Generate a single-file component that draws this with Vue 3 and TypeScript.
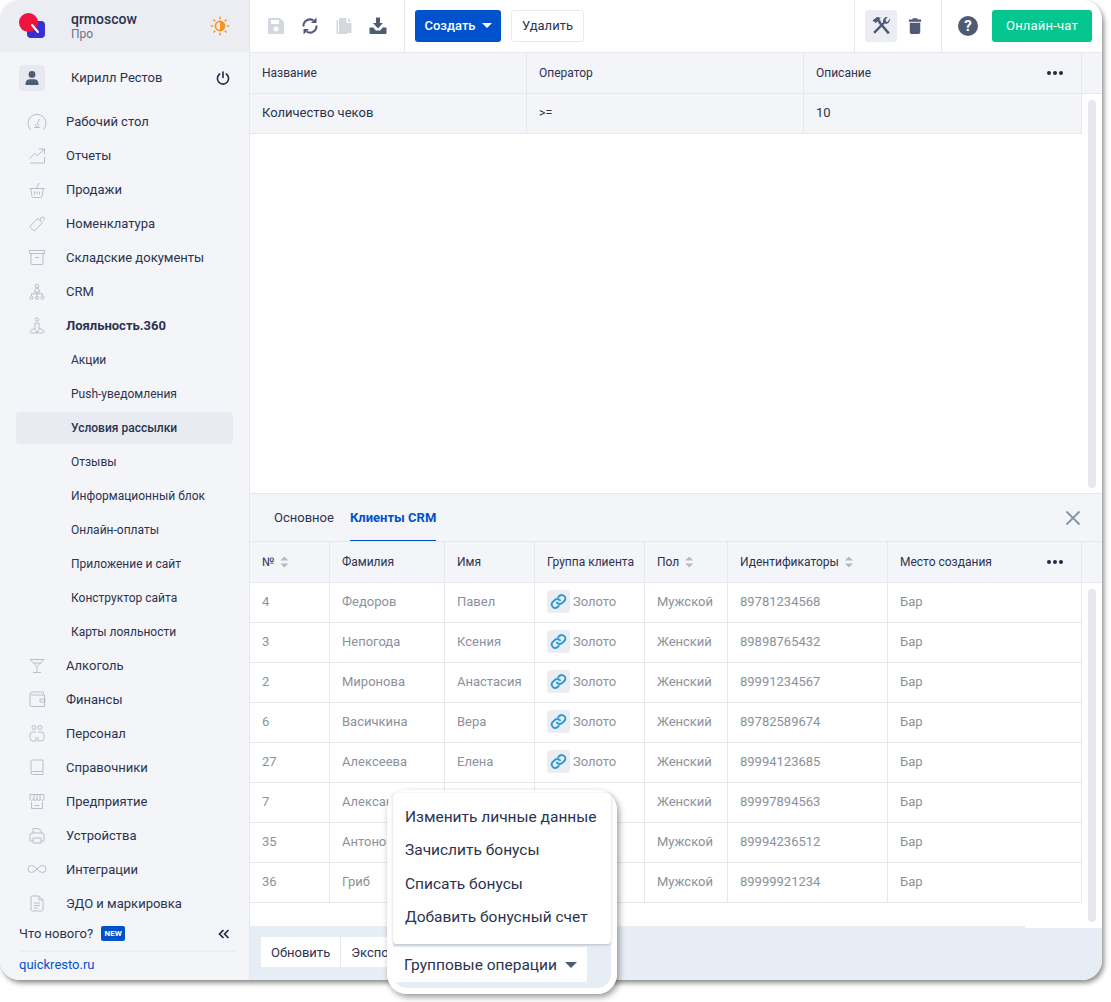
<template>
  <div class="page">
    <div class="window">
      <aside class="sidebar">
        <div class="brand">
          <svg class="logo" width="26" height="26" viewBox="0 0 26 26">
            <rect x="8" y="8" width="18" height="17" rx="4" fill="#3a2fd0" />
            <circle cx="9.500" cy="9.500" r="9.500" fill="#f0123f" />
            <path d="M13 12l6 7" stroke="#fff" stroke-width="2" stroke-linecap="round" />
          </svg>
          <div class="brandText">
            <div class="brandName">qrmoscow</div>
            <div class="brandPlan">Про</div>
          </div>
          <svg class="sun" width="20" height="20" viewBox="0 0 20 20">
            <circle cx="10" cy="10" r="4.600" fill="none" stroke="#f7941d" stroke-width="1.600" />
            <path d="M10 5.400a4.600 4.600 0 0 1 0 9.200z" fill="#f7941d" />
            <path d="M10 .8v2.400M10 16.800v2.400M.8 10h2.400M16.800 10h2.400M3.500 3.500l1.700 1.700M14.800 14.800l1.700 1.700M3.500 16.500l1.700-1.700M14.800 5.200l1.700-1.700" stroke="#f7941d" stroke-width="1.500" />
          </svg>
        </div>

        <div class="user">
          <div class="avatar">
            <svg width="16" height="16" viewBox="0 0 16 16" fill="#4f5b76">
              <circle cx="8" cy="4.400" r="3.400" />
              <path d="M1.500 15v-1.600C1.500 10.800 3.600 9.200 6 9.200h4c2.400 0 4.500 1.600 4.500 4.200V15z" />
            </svg>
          </div>
          <span class="userName">Кирилл Рестов</span>
          <svg class="power" width="14" height="14" viewBox="0 0 14 14" fill="none" stroke="#1f2a44" stroke-width="1.600" stroke-linecap="round">
            <path d="M7 1v5.500M3.700 3a5.600 5.600 0 1 0 6.600 0" />
          </svg>
        </div>

        <nav class="nav">
          <template v-for="item in navItems" :key="item.label">
            <div v-if="item.icon" class="navItem" :class="{ navBold: item.bold }">
              <svg class="navIcon" width="20" height="20" viewBox="0 0 20 20" fill="none" stroke="#b9bec8" stroke-width="1">
                <path v-for="d in item.icon" :key="d" :d="d" />
              </svg>
              <span>{{ item.label }}</span>
            </div>
            <div v-else class="subItem" :class="{ subActive: item.active }">{{ item.label }}</div>
          </template>
        </nav>

        <div class="news">
          <span>Что нового?</span>
          <span class="newBadge">NEW</span>
          <svg class="collapse" width="12" height="10" viewBox="0 0 12 10" fill="none" stroke="#1f2a44" stroke-width="1.700">
            <path d="M5.500 1L1.500 5l4 4M10.500 1l-4 4 4 4" />
          </svg>
        </div>
        <div class="siteLink">quickresto.ru</div>
      </aside>

      <main class="main">
        <header class="toolbar">
          <div class="toolGroup iconsGroup">
            <svg width="20" height="20" viewBox="0 0 20 20" fill="#d3d7de">
              <path fill-rule="evenodd" d="M3.500 2h10.500L18 6v10.500a1.500 1.500 0 0 1-1.500 1.500h-13A1.500 1.500 0 0 1 2 16.500v-13A1.500 1.500 0 0 1 3.500 2zM5 4v4h8V4zM10 10.500a2.500 2.500 0 1 0 0 5 2.500 2.500 0 0 0 0-5z" />
            </svg>
            <svg width="20" height="20" viewBox="0 0 20 20" fill="none" stroke="#4f5b76" stroke-width="2">
              <path d="M3.500 10.500A6.500 6.500 0 0 1 13.500 4.500M16.500 9.500A6.500 6.500 0 0 1 6.500 15.500" />
              <path d="M16.500 1.500V7H11z" fill="#4f5b76" stroke="none" />
              <path d="M3.500 18.500V13H9z" fill="#4f5b76" stroke="none" />
            </svg>
            <svg width="20" height="20" viewBox="0 0 20 20" fill="#d3d7de">
              <path d="M2.500 4H4v12.500h9V18H3.500a1 1 0 0 1-1-1z" />
              <path d="M6 2h6.500v5h5v9a1 1 0 0 1-1 1H6a1 1 0 0 1-1-1V3a1 1 0 0 1 1-1zM14 2l3.500 3.500H14z" />
            </svg>
            <svg width="20" height="20" viewBox="0 0 20 20" fill="#4f5b76">
              <path d="M8 1.500h4V7h3l-5 5.500L5 7h3z" />
              <path d="M1.500 11.500h3.800l2.500 3h4.400l2.500-3h3.800V17a1 1 0 0 1-1 1h-15a1 1 0 0 1-1-1z" />
            </svg>
          </div>
          <div class="toolGroup actionsGroup">
            <button class="btn btnPrimary">Создать<span class="caret"></span></button>
            <button class="btn btnPlain">Удалить</button>
          </div>
          <div class="toolGroup toolsGroup">
            <span class="toolActive">
              <svg width="22" height="22" viewBox="0 0 22 22" fill="#4f5b76">
                <path d="M2.500 5.500L7 2l4 .8-1.700 1.500 1.700 2L9.300 8 7.700 6.300 5.800 8z" />
                <path d="M8 7.500l1.800-1.500 10 11.500-2 1.800z" />
                <path d="M19.700 3.300a4 4 0 0 1-5 5.200L5 18.800l-1.800-1.700 9.900-10a4 4 0 0 1 4.700-5l-2.300 2.400.5 1.900 1.900.4z" />
              </svg>
            </span>
            <svg class="trash" width="14" height="18" viewBox="0 0 16 20" fill="#4f5b76">
              <path d="M5.500 1h5l.6 1.500H15V5H1V2.500h3.900zM2 6.200h12V17a2 2 0 0 1-2 2H4a2 2 0 0 1-2-2z" />
            </svg>
          </div>
          <div class="toolGroup helpGroup">
            <span class="help">?</span>
            <button class="btn btnChat">Онлайн-чат</button>
          </div>
        </header>

        <section class="topPanel">
          <table class="grid topGrid">
            <colgroup>
              <col style="width: 277px" />
              <col style="width: 277px" />
              <col style="width: 278px" />
            </colgroup>
            <thead>
              <tr>
                <th>Название</th>
                <th>Оператор</th>
                <th>
                  <div class="thFlex">Описание<span class="dots"><i></i><i></i><i></i></span></div>
                </th>
              </tr>
            </thead>
            <tbody>
              <tr>
                <td>Количество чеков</td>
                <td class="small">&gt;=</td>
                <td>10</td>
              </tr>
            </tbody>
          </table>
          <div class="scrollThumb topThumb"></div>
        </section>

        <section class="bottomPanel">
          <div class="tabs">
            <span class="tab">Основное</span>
            <span class="tab tabActive">Клиенты CRM</span>
            <svg class="close" width="16" height="16" viewBox="0 0 16 16" stroke="#8195a6" stroke-width="1.800" fill="none">
              <path d="M1.500 1.500l13 13M14.500 1.500l-13 13" />
            </svg>
          </div>
          <div class="headFill">
            <table class="grid clientGrid">
              <colgroup>
                <col v-for="w in clientCols" :key="w" :style="{ width: w + 'px' }" />
              </colgroup>
              <thead>
                <tr>
                  <th><div class="thSort">№<span class="sort"></span></div></th>
                  <th>Фамилия</th>
                  <th>Имя</th>
                  <th>Группа клиента</th>
                  <th><div class="thSort">Пол<span class="sort"></span></div></th>
                  <th><div class="thSort">Идентификаторы<span class="sort"></span></div></th>
                  <th>
                    <div class="thFlex">Место создания<span class="dots"><i></i><i></i><i></i></span></div>
                  </th>
                </tr>
              </thead>
              <tbody>
                <tr v-for="c in clients" :key="c.id">
                  <td>{{ c.id }}</td>
                  <td class="clip">{{ c.last }}</td>
                  <td>{{ c.first }}</td>
                  <td>
                    <div v-if="c.first" class="groupCell">
                      <span class="linkBox">
                        <svg width="17" height="17" viewBox="0 0 24 24" fill="none" stroke="#2a9bd8" stroke-width="2.800" stroke-linecap="round">
                          <path d="M10 13.500a5 5 0 0 0 7.500.5l3-3a5 5 0 0 0-7-7l-1.700 1.700" />
                          <path d="M14 10.500a5 5 0 0 0-7.500-.5l-3 3a5 5 0 0 0 7 7l1.700-1.700" />
                        </svg>
                      </span>
                      Золото
                    </div>
                  </td>
                  <td>{{ c.gender }}</td>
                  <td>{{ c.phone }}</td>
                  <td>Бар</td>
                </tr>
              </tbody>
            </table>
          </div>
          <div class="scrollThumb bottomThumb"></div>
        </section>

        <footer class="footer">
          <button class="footBtn">Обновить</button>
          <button class="footBtn footExport">Экспорт</button>
        </footer>
      </main>
    </div>

    <div class="callout">
      <ul class="menu">
        <li v-for="op in groupOps" :key="op">{{ op }}</li>
      </ul>
      <button class="groupBtn">Групповые операции<span class="caret caretGrey"></span></button>
    </div>
  </div>
</template>

<script setup lang="ts">
interface NavItem {
  label: string
  icon?: string[]
  bold?: boolean
  active?: boolean
}

interface Client {
  id: number
  last: string
  first: string
  gender: string
  phone: string
}

const navItems: NavItem[] = [
  { label: 'Рабочий стол', icon: ['M4 19A9 9 0 1 1 16 19', 'M10 13.500L12.500 8', 'M7 16.500H13', 'M8.500 13a1.700 1.700 0 1 0 3 0'] },
  { label: 'Отчеты', icon: ['M2.500 13.500L8 8.500L10.500 10.500L17 4.500', 'M12 4H17.500V9', 'M3 18H17.500V12'] },
  { label: 'Продажи', icon: ['M12 4L9.500 9', 'M2.500 9.500H17.500', 'M3.800 10L5 17.200Q5.200 18.500 6.500 18.500H13.500Q14.800 18.500 15 17.200L16.200 10', 'M7.500 12.500V15.500M10 12.500V15.500M12.500 12.500V15.500'] },
  { label: 'Номенклатура', icon: ['M3.200 13L11 5.500L15.500 9.500L8 17.500Q7.300 18 6.500 17.500L3.300 14.500Q2.700 13.700 3.200 13Z', 'M13 7.500Q13.500 3.500 16 4Q18.500 4.700 16.500 7.500'] },
  { label: 'Складские документы', icon: ['M2.500 3.500H17.500V6.500H2.500Z', 'M4 6.500V16.500Q4 17.500 5 17.500H15Q16 17.500 16 16.500V6.500', 'M8 10.500H12'] },
  { label: 'CRM', icon: ['M8.200 5a1.800 1.800 0 1 0 3.600 0a1.800 1.800 0 1 0-3.600 0', 'M7 11L8.800 7.500H11.200L13 11Z', 'M4.500 15V12.800H15.500V15', 'M10 11V15', 'M3 16.800a1.500 1.500 0 1 0 3 0a1.500 1.500 0 1 0-3 0M8.500 16.800a1.500 1.500 0 1 0 3 0a1.500 1.500 0 1 0-3 0M14 16.800a1.500 1.500 0 1 0 3 0a1.500 1.500 0 1 0-3 0'] },
  { label: 'Лояльность.360', bold: true, icon: ['M8.300 4.500a1.700 1.700 0 1 0 3.400 0a1.700 1.700 0 1 0-3.400 0', 'M8 8H12V13L16.500 15.500Q18 17 16 18H4Q2 17 3.500 15.500L8 13Z', 'M8 13V15L11 18', 'M12 13V15L9 18'] },
  { label: 'Акции' },
  { label: 'Push-уведомления' },
  { label: 'Условия рассылки', active: true },
  { label: 'Отзывы' },
  { label: 'Информационный блок' },
  { label: 'Онлайн-оплаты' },
  { label: 'Приложение и сайт' },
  { label: 'Конструктор сайта' },
  { label: 'Карты лояльности' },
  { label: 'Алкоголь', icon: ['M3 4.500H17L10 11.500Z', 'M6 8H14', 'M10 11.500V17', 'M6 17.500H14'] },
  { label: 'Финансы', icon: ['M3 5.500Q3 3 5.500 3H16.500V5.500', 'M3 5.500V16Q3 17.500 4.500 17.500H17.500V6H4', 'M13 10.200H18V13H13Z'] },
  { label: 'Персонал', icon: ['M5 4.500a2 2 0 1 0 4 0a2 2 0 1 0-4 0M11 4.500a2 2 0 1 0 4 0a2 2 0 1 0-4 0', 'M9 9H5.500Q3 9 3 12V15Q3 18 6 18H9V14', 'M11 9H14.500Q17 9 17 12V15Q17 18 14 18H11V14'] },
  { label: 'Справочники', icon: ['M4 15V4.500Q4 3 5.500 3H16V14.500H5.500Q4 14.500 4 16Q4 17.500 5.500 17.500H16V15.500'] },
  { label: 'Предприятие', icon: ['M3 3.500H17V8.500Q15.500 10.500 13.800 8.500Q12 10.500 10 8.500Q8 10.500 6.200 8.500Q4.500 10.500 3 8.500Z', 'M7 3.500V8.500M10 3.500V8.500M13 3.500V8.500', 'M4.500 11V17.500H15.500V11', 'M7.500 14.500H12.500'] },
  { label: 'Устройства', icon: ['M6 8V3.500H11L14 5.500V8', 'M3 16V10Q3 8 5 8H15Q17 8 17 10V16H14', 'M6 16H3', 'M6 13H14V18H6Z'] },
  { label: 'Интеграции', icon: ['M10 10Q7 6.500 4.500 6.500a3.500 3.500 0 0 0 0 7Q7 13.500 10 10Q13 6.500 15.500 6.500a3.500 3.500 0 0 1 0 7Q13 13.500 10 10Z'] },
  { label: 'ЭДО и маркировка', icon: ['M5 3H12L16 7V16.500Q16 18 14.500 18H5.500Q4 18 4 16.500V4Q4 3 5 3Z', 'M12 3V7H16', 'M7 10H13M7 12.500H13M7 15H11'] },
]

const clientCols = [80, 115, 90, 110, 83, 160, 194]

// names of the last rows sit under the group menu
const clients: Client[] = [
  { id: 4, last: 'Федоров', first: 'Павел', gender: 'Мужской', phone: '89781234568' },
  { id: 3, last: 'Непогода', first: 'Ксения', gender: 'Женский', phone: '89898765432' },
  { id: 2, last: 'Миронова', first: 'Анастасия', gender: 'Женский', phone: '89991234567' },
  { id: 6, last: 'Васичкина', first: 'Вера', gender: 'Женский', phone: '89782589674' },
  { id: 27, last: 'Алексеева', first: 'Елена', gender: 'Женский', phone: '89994123685' },
  { id: 7, last: 'Алексан', first: '', gender: 'Женский', phone: '89997894563' },
  { id: 35, last: 'Антонов', first: '', gender: 'Мужской', phone: '89994236512' },
  { id: 36, last: 'Гриб', first: '', gender: 'Мужской', phone: '89999921234' },
]

const groupOps = ['Изменить личные данные', 'Зачислить бонусы', 'Списать бонусы', 'Добавить бонусный счет']
</script>

<style>
html,
body {
  margin: 0;
  background: #fff;
}
</style>

<style scoped>
.page {
  position: relative;
  width: 1111px;
  height: 1002px;
  overflow: hidden;
  font-family: Roboto, "Noto Sans", sans-serif;
  font-size: 13px;
  color: #2b3350;
}

.window {
  display: flex;
  width: 1102px;
  height: 980px;
  border-radius: 20px;
  overflow: hidden;
  box-shadow: 2px 3px 5px rgba(0, 0, 0, 0.45);
  background: #fff;
}

.sidebar {
  width: 249px;
  flex-shrink: 0;
  display: flex;
  flex-direction: column;
  background: #f3f5f9;
  border-right: 1px solid #e6e8ee;
}

.brand {
  display: flex;
  align-items: center;
  height: 52px;
  padding: 0 19px;
  background: #ebedf2;
}

.brandText {
  margin-left: 26px;
  flex: 1;
}

.brandName {
  font-size: 14px;
  font-weight: 500;
  line-height: 16px;
}

.brandPlan {
  font-size: 12px;
  line-height: 15px;
  color: #6b7385;
}

.user {
  display: flex;
  align-items: center;
  height: 26px;
  padding: 13px 19px;
}

.avatar {
  width: 26px;
  height: 26px;
  display: flex;
  align-items: center;
  justify-content: center;
  border-radius: 4px;
  background: #e6e9ef;
}

.userName {
  margin-left: 26px;
  flex: 1;
  padding-bottom: 2px;
}

.nav {
  flex: 1;
}

.navItem {
  display: flex;
  align-items: center;
  height: 34px;
  padding-left: 27px;
  gap: 19px;
}

.navBold {
  font-weight: 700;
}

.navIcon {
  flex-shrink: 0;
}

.subItem {
  height: 32px;
  margin: 2px 16px 0;
  padding-left: 55px;
  line-height: 32px;
  font-size: 12px;
  border-radius: 4px;
}

.subActive {
  background: #e8ebf2;
  font-weight: 500;
}

.news {
  display: flex;
  align-items: center;
  height: 25px;
  margin: 0 14px 0 19px;
  border-bottom: 2px solid #ebedf2;
  padding-bottom: 4px;
}

.newBadge {
  margin-left: 8px;
  width: 24px;
  height: 15px;
  line-height: 15px;
  text-align: center;
  font-size: 8px;
  font-weight: 700;
  color: #fff;
  background: #0052cc;
  border-radius: 2px;
}

.collapse {
  margin-left: auto;
  margin-right: 5px;
}

.siteLink {
  padding: 5px 19px 8px;
  color: #0052cc;
}

.main {
  flex: 1;
  min-width: 0;
  display: flex;
  flex-direction: column;
}

.toolbar {
  display: flex;
  height: 52px;
  border-bottom: 1px solid #e6e8ee;
  background: #fff;
}

.toolGroup {
  display: flex;
  align-items: center;
  box-sizing: border-box;
  border-right: 1px solid #e6e8ee;
}

.iconsGroup {
  width: 155px;
  padding: 0 16px;
  justify-content: space-between;
}

.actionsGroup {
  width: 450px;
  gap: 10px;
  padding-left: 10px;
}

.toolsGroup {
  width: 87px;
  padding-left: 10px;
}

.helpGroup {
  flex: 1;
  border-right: none;
  padding-left: 16px;
}

.btn {
  height: 32px;
  border-radius: 3px;
  border: 1px solid transparent;
  font: inherit;
  padding: 0 0 2px;
}

.btnPrimary {
  width: 86px;
  background: #0052cc;
  color: #fff;
  font-weight: 500;
}

.btnPlain {
  width: 73px;
  background: #fff;
  border-color: #e8eaee;
  color: #2b3350;
}

.btnChat {
  width: 100px;
  margin-left: 14px;
  background: #05c68e;
  color: #fff;
  letter-spacing: 0.2px;
}

.caret {
  display: inline-block;
  margin-left: 6px;
  vertical-align: 2px;
  border-left: 5px solid transparent;
  border-right: 5px solid transparent;
  border-top: 5px solid #fff;
}

.caretGrey {
  margin-left: 8px;
  border-left-width: 6px;
  border-right-width: 6px;
  border-top: 6px solid #4f5b76;
}

.toolActive {
  width: 32px;
  height: 32px;
  display: flex;
  align-items: center;
  justify-content: center;
  border-radius: 3px;
  background: #ebedf2;
}

.trash {
  margin-left: 11px;
}

.help {
  width: 20px;
  height: 20px;
  line-height: 20px;
  text-align: center;
  border-radius: 50%;
  background: #4f5b76;
  color: #fff;
  font-size: 15px;
  font-weight: 700;
}

.topPanel {
  position: relative;
  height: 440px;
  border-bottom: 1px solid #e6e8ee;
  background: #fff;
}

.grid {
  width: 832px;
  table-layout: fixed;
  border-collapse: separate;
  border-spacing: 0;
}

.grid th,
.grid td {
  box-sizing: border-box;
  padding: 0 12px 2px;
  text-align: left;
  border-right: 1px solid #e6e8ee;
  border-bottom: 1px solid #e6e8ee;
  white-space: nowrap;
}

.grid th {
  height: 41px;
  padding-bottom: 0;
  font-weight: 400;
  font-size: 12px;
  background: #f3f5f9;
}

.grid td {
  height: 40px;
}

.topGrid td {
  background: #f3f5f9;
}

.clientGrid td {
  color: #8b919c;
  background: #fff;
}

.clip {
  overflow: hidden;
}

.small {
  font-size: 12.500px;
}

.topPanel::before {
  content: "";
  position: absolute;
  top: 0;
  left: 832px;
  right: 0;
  height: 40px;
  background: #f3f5f9;
  border-bottom: 1px solid #e6e8ee;
}

.thFlex {
  display: flex;
  align-items: center;
  justify-content: space-between;
  padding-right: 6px;
}

.thSort {
  display: flex;
  align-items: center;
  gap: 6px;
}

.sort {
  width: 8px;
  height: 11px;
  background: #b4b9c3;
  clip-path: polygon(50% 0, 100% 36%, 0 36%, 0 64%, 100% 64%, 50% 100%, 0 64%, 0 36%);
}

.dots {
  display: flex;
  gap: 2px;
}

.dots i {
  width: 4px;
  height: 4px;
  border-radius: 50%;
  background: #1f2a44;
}

.scrollThumb {
  position: absolute;
  left: 838px;
  width: 8px;
  border-radius: 4px;
  background: #e6e8ee;
}

.topThumb {
  top: 47px;
  height: 388px;
}

.bottomPanel {
  position: relative;
  flex: 1;
  background: #fff;
}

.tabs {
  display: flex;
  align-items: stretch;
  height: 47px;
  padding-left: 24px;
  gap: 16px;
  background: #f3f5f9;
  border-bottom: 1px solid #e6e8ee;
}

.tab {
  line-height: 47px;
}

.tabActive {
  height: 46px;
  color: #0052cc;
  font-weight: 700;
  border-bottom: 1px solid #0052cc;
}

.close {
  position: absolute;
  right: 21px;
  top: 16px;
}

.headFill {
  position: relative;
}

.headFill::before {
  content: "";
  position: absolute;
  top: 0;
  left: 832px;
  right: 0;
  height: 40px;
  background: #f3f5f9;
  border-bottom: 1px solid #e6e8ee;
}

.groupCell {
  display: flex;
  align-items: center;
  gap: 3px;
}

.linkBox {
  width: 23px;
  height: 23px;
  display: flex;
  align-items: center;
  justify-content: center;
  border-radius: 4px;
  background: #ebedf2;
}

.bottomThumb {
  top: 95px;
  height: 333px;
}

.footer {
  position: relative;
  display: flex;
  align-items: flex-start;
  height: 43px;
  padding: 11px 0 0 11px;
  background: #e7edf4;
}

.footer::after {
  content: "";
  position: absolute;
  top: 0;
  left: 775px;
  right: 0;
  height: 2px;
  background: #fff;
}

.footBtn {
  height: 30px;
  padding: 0 10px;
  border: none;
  border-right: 1px solid #e6e8ee;
  background: #fff;
  font: inherit;
  color: #2b3350;
}

.footExport {
  width: 76px;
  text-align: left;
}

.callout {
  position: absolute;
  left: 387px;
  top: 790px;
  width: 218px;
  height: 195px;
  border: solid #fff;
  border-width: 3px 6px 6px;
  border-radius: 20px;
  box-shadow: 2px 3px 6px rgba(0, 0, 0, 0.4);
  background: linear-gradient(transparent 133px, #e7edf4 133px);
}

.menu {
  list-style: none;
  margin: 0;
  padding: 8px 0 9px 12px;
  height: 134px;
  background: #fff;
  border-radius: 4px;
  box-shadow: 0 1px 3px rgba(0, 0, 0, 0.2);
  font-size: 15.500px;
}

.menu li {
  height: 33.300px;
  line-height: 33.300px;
  white-space: nowrap;
}

.groupBtn {
  display: block;
  width: 194px;
  height: 35px;
  margin-top: 3px;
  padding: 0 0 0 11px;
  text-align: left;
  border: none;
  border-radius: 2px;
  background: #fff;
  font: inherit;
  font-size: 15.500px;
  color: #2b3350;
}
</style>
